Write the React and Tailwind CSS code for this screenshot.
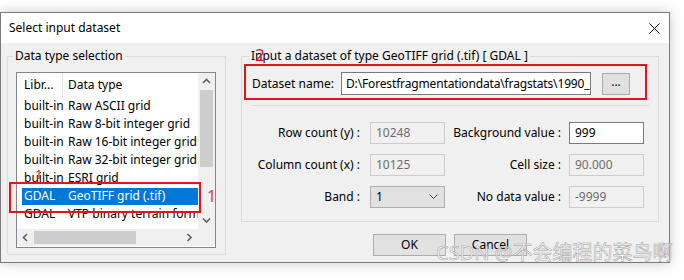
import { useState } from 'react'

const rows = [
  ['built-in', 'Raw ASCII grid'],
  ['built-in', 'Raw 8-bit integer grid'],
  ['built-in', 'Raw 16-bit integer grid'],
  ['built-in', 'Raw 32-bit integer grid'],
  ['built-in', 'ESRI grid'],
  ['GDAL', 'GeoTIFF grid (.tif)'],
  ['GDAL', 'VTP binary terrain format'],
  ['GDAL', 'ERDAS Imagine images'],
]

// small scrollbar arrows
const Chevron = ({ dir }) => {
  const d = {
    up: 'M1 5 L4.5 1.5 L8 5',
    down: 'M1 1.5 L4.5 5 L8 1.5',
    left: 'M5 1 L1.5 4.5 L5 8',
    right: 'M1.5 1 L5 4.5 L1.5 8',
  }[dir]
  const horiz = dir === 'left' || dir === 'right'
  return (
    <svg width={horiz ? 7 : 9} height={horiz ? 9 : 7} viewBox={horiz ? '0 0 7 9' : '0 0 9 7'}>
      <path d={d} fill="none" stroke="#606060" strokeWidth="1.6" />
    </svg>
  )
}

const Field = ({ value, disabled }) => (
  <div
    className={`w-[75px] h-[22px] flex items-center pl-[5px] border ${
      disabled ? 'border-[#cccccc] bg-[#f0f0f0] text-[#6d6d6d]' : 'border-[#7a7a7a] bg-white text-black'
    }`}
  >
    {value}
  </div>
)

export default function App() {
  const [selected, setSelected] = useState(5)

  return (
    <div className="relative w-[684px] h-[280px] bg-white overflow-hidden pt-[12px] font-['Noto_Sans',sans-serif] text-[12px] leading-[14px] text-black">
      <div className="w-[670px] h-[251px] border border-[#7a7a7a] flex flex-col shadow-[0_0_12px_rgba(0,0,0,0.22)]">
        {/* title bar */}
        <div className="h-[30px] bg-white flex items-center justify-between pl-[8px] pr-[9px]">
          <span className="text-[12px]">Select input dataset</span>
          <svg width="11" height="11" viewBox="0 0 11 11">
            <path d="M0.5 0.5 L10.5 10.5 M10.5 0.5 L0.5 10.5" stroke="#111" strokeWidth="1" />
          </svg>
        </div>

        {/* body */}
        <div className="flex-1 bg-[#f0f0f0] flex pl-[6px] pt-[13px]">
          {/* data type selection */}
          <div className="relative w-[219px] h-[199px] border border-[#dcdcdc]">
            <span className="absolute left-[5px] -top-[8px] px-[2px] bg-[#f0f0f0]">Data type selection</span>
            <div className="ml-[8px] mt-[15px] w-[200px] h-[176px] border border-[#828790] bg-white grid grid-cols-[181px_17px] grid-rows-[156px_17px]">
              <div className="overflow-hidden">
                <div className="h-[24px] flex items-center">
                  <div className="w-[46px] h-full flex items-center pl-[7px] border-r border-[#e5e5e5]">Libr...</div>
                  <div className="pl-[5px]">Data type</div>
                </div>
                {rows.map(([lib, type], i) => (
                  <div key={i} className="h-[18px] flex items-center" onClick={() => setSelected(i)}>
                    <div
                      className={`ml-[5px] w-[176px] h-[17px] flex items-center whitespace-nowrap overflow-hidden ${
                        selected === i ? 'bg-[#0078d7] text-white' : ''
                      } ${i === 7 ? 'pt-[6px]' : ''}`}
                    >
                      <span className="w-[46px] pl-[2px] shrink-0">{lib}</span>
                      <span>{type}</span>
                    </div>
                  </div>
                ))}
              </div>
              <div className="bg-[#f0f0f0] flex flex-col items-center">
                <div className="h-[17px] flex items-center justify-center"><Chevron dir="up" /></div>
                <div className="w-[13px] h-[77px] bg-[#cdcdcd]" />
                <div className="flex-1" />
                <div className="h-[17px] flex items-center justify-center"><Chevron dir="down" /></div>
              </div>
              <div className="bg-[#f0f0f0] flex items-center">
                <div className="w-[17px] flex justify-center"><Chevron dir="left" /></div>
                <div className="w-[102px] h-[13px] bg-[#cdcdcd]" />
                <div className="flex-1" />
                <div className="w-[17px] flex justify-center"><Chevron dir="right" /></div>
              </div>
              <div className="bg-[#f0f0f0]" />
            </div>
          </div>

          {/* right column */}
          <div className="ml-[15px] flex flex-col">
            <div className="relative w-[418px] h-[166px] border border-[#dcdcdc]">
              <span className="absolute left-[7px] -top-[8px] px-[2px] bg-[#f0f0f0]">
                Input a dataset of type GeoTIFF grid (.tif) [ GDAL ]
              </span>
              <div className="mt-[15px] pl-[10px] flex items-center">
                <span className="w-[89px]">Dataset name:</span>
                <div className="w-[250px] h-[23px] border border-[#7a7a7a] bg-white flex items-center pl-[4px] whitespace-nowrap overflow-hidden tracking-[-0.15px]">
                  D:\Forestfragmentationdata\fragstats\1990_
                </div>
                <div className="ml-[11px] w-[28px] h-[22px] border border-[#adadad] bg-[#e1e1e1] flex items-center justify-center pb-[3px]">
                  ...
                </div>
              </div>
              <div className="ml-[10px] mt-[10px] w-[397px] h-px bg-[#dcdcdc]" />
              <div className="mt-[16px] flex flex-col gap-[10px]">
                <div className="h-[22px] flex items-center">
                  <span className="w-[118px] text-right">Row count (y) :</span>
                  <div className="ml-[10px]"><Field value="10248" disabled /></div>
                  <span className="w-[116px] text-right">Background value :</span>
                  <div className="ml-[8px]"><Field value="999" /></div>
                </div>
                <div className="h-[22px] flex items-center">
                  <span className="w-[118px] text-right">Column count (x) :</span>
                  <div className="ml-[10px]"><Field value="10125" disabled /></div>
                  <span className="w-[116px] text-right">Cell size :</span>
                  <div className="ml-[8px]"><Field value="90.000" disabled /></div>
                </div>
                <div className="h-[22px] flex items-center">
                  <span className="w-[118px] text-right">Band :</span>
                  <div className="ml-[10px] w-[75px] h-[22px] border border-[#adadad] bg-[#e1e1e1] flex items-center justify-between pl-[5px] pr-[6px]">
                    <span>1</span>
                    <svg width="9" height="6" viewBox="0 0 9 6">
                      <path d="M0.5 0.5 L4.5 4.5 L8.5 0.5" fill="none" stroke="#444" strokeWidth="1" />
                    </svg>
                  </div>
                  <span className="w-[116px] text-right">No data value :</span>
                  <div className="ml-[8px]"><Field value="-9999" disabled /></div>
                </div>
              </div>
            </div>
            <div className="mt-[12px] ml-[132px] flex gap-[8px]">
              <button className="w-[73px] h-[22px] border border-[#adadad] bg-[#e1e1e1]">OK</button>
              <button className="w-[73px] h-[22px] border border-[#adadad] bg-[#e1e1e1]">Cancel</button>
            </div>
          </div>
        </div>
      </div>

      {/* red annotations */}
      <div className="absolute left-[9px] top-[182px] w-[192px] h-[31px] border-2 border-[#e5141c]" />
      <div className="absolute left-[244px] top-[64px] w-[403px] h-[36px] border-2 border-[#e5141c]" />
      <span className="absolute left-[207px] top-[187px] text-[16px] leading-[18px] text-[#ee2f6a]">1</span>
      <span className="absolute left-[35px] top-[167px] text-[13px] leading-[14px] text-[#e5141c]">1</span>
      <span className="absolute left-[255px] top-[46px] text-[17px] leading-[18px] text-[#e5141c]">2</span>

      {/* watermark */}
      <span className="absolute left-[436px] top-[241px] text-[20px] leading-[24px] whitespace-nowrap font-['Noto_Sans','Noto_Sans_CJK_SC',sans-serif] text-[rgba(255,255,255,0.7)] [-webkit-text-stroke:0.5px_#a0a0a0]">
        CSDN @不会编程的菜鸟啊
      </span>
    </div>
  )
}
